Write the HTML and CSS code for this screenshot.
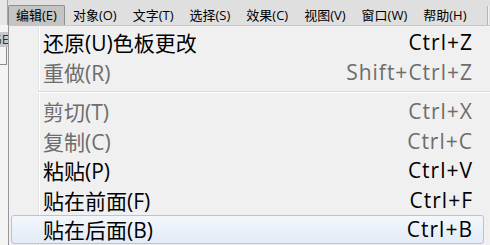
FILE: index.html
```html
<!DOCTYPE html>
<html lang="zh">
<head>
<meta charset="utf-8">
<link rel="stylesheet" href="styles.css">
</head>
<body>
<div class="app">
  <div class="strip">
    <div class="s-top"></div>
    <div class="s-gap"></div>
    <div class="s-ge"><span>GE</span></div>
    <div class="s-corner"></div>
    <div class="s-rest"></div>
  </div>
  <div class="main">
    <div class="menubar">
      <div class="mb-item active">编辑(E)</div>
      <div class="mb-item">对象(O)</div>
      <div class="mb-item">文字(T)</div>
      <div class="mb-item">选择(S)</div>
      <div class="mb-item">效果(C)</div>
      <div class="mb-item">视图(V)</div>
      <div class="mb-item">窗口(W)</div>
      <div class="mb-item">帮助(H)</div>
      <div class="mb-sep"></div>
    </div>
    <div class="menu">
      <div class="gutter"></div>
      <div class="items">
        <div class="row"><span class="label">还原(U)色板更改</span><span class="key">Ctrl+Z</span></div>
        <div class="row disabled"><span class="label">重做(R)</span><span class="key">Shift+Ctrl+Z</span></div>
        <div class="sep"></div>
        <div class="row disabled"><span class="label">剪切(T)</span><span class="key">Ctrl+X</span></div>
        <div class="row disabled"><span class="label">复制(C)</span><span class="key">Ctrl+C</span></div>
        <div class="row"><span class="label">粘贴(P)</span><span class="key">Ctrl+V</span></div>
        <div class="row"><span class="label">贴在前面(F)</span><span class="key">Ctrl+F</span></div>
        <div class="row hover"><span class="label">贴在后面(B)</span><span class="key">Ctrl+B</span></div>
      </div>
    </div>
  </div>
</div>
</body>
</html>
```

FILE: styles.css
```css
* { box-sizing: border-box; }
html, body { margin: 0; padding: 0; }
body {
  width: 490px;
  height: 245px;
  overflow: hidden;
  background: #f0f0f0;
  font-family: "Open Sans", "Noto Sans CJK SC", sans-serif;
}
.app { display: flex; width: 490px; height: 245px; }

.strip { width: 8px; flex: none; display: flex; flex-direction: column; overflow: hidden; background: #f4f4f4; }
.s-top { height: 25px; background: #e6e6e6; border-right: 1px solid #a4a4a4; }
.s-gap { height: 7px; background: #f4f4f4; }
.s-ge { height: 15px; background: #c9c9c9; display: flex; justify-content: flex-end; overflow: hidden; font-size: 13px; line-height: 15px; color: #333; }
.s-ge span { flex: none; margin-right: -1px; }
.s-corner { height: 18px; width: 7px; border-right: 1px solid #8a8a8a; border-bottom: 1px solid #8a8a8a; }
.s-rest { flex: 1; }

.main { flex: 1; display: flex; flex-direction: column; min-width: 0; }

.menubar {
  height: 25px;
  flex: none;
  background: #dfdfdf;
  display: flex;
  align-items: flex-end;
  font-size: 13px;
  color: #000;
}
.mb-item {
  height: 20px;
  line-height: 18px;
  padding: 0 7px 0 7px;
  border: 1px solid transparent;
  border-bottom: none;
  white-space: nowrap;
}
.mb-item.active {
  background: #c4c4c4;
  border-color: #8f8f8f;
  border-radius: 2px 2px 0 0;
}
.mb-sep {
  height: 19px;
  width: 2px;
  margin-left: 12px;
  align-self: flex-end;
  border-left: 1px solid #b4b4b4;
  border-right: 1px solid #f4f4f4;
}

.menu {
  flex: 1;
  display: flex;
  background: #f0f0f0;
  border-left: 1px solid #979797;
  border-top: 1px solid #c6c6c6;
  position: relative;
}
.gutter {
  width: 30px;
  flex: none;
  border-right: 1px solid #e2e3e3;
  box-shadow: 1px 0 0 #ffffff;
  margin-right: -30px;
  position: relative;
  z-index: 0;
}
.items { flex: 1; padding-top: 1.5px; min-width: 0; position: relative; z-index: 1; }
.row {
  height: 29.5px;
  display: flex;
  align-items: center;
  justify-content: space-between;
  margin: 0 6px 0 2px;
  padding: 0 11px 0 31px;
  border: 1px solid transparent;
  border-radius: 3px;
  font-size: 21px;
  color: #000;
  white-space: nowrap;
}
.row.disabled { color: #6d6d6d; }
.row.hover {
  border-color: #a9c7ec;
  background: linear-gradient(#f3f7fc, #e3ebf7);
}
.key { letter-spacing: 1px; margin-right: -1px; }
.sep {
  height: 10px;
  margin-left: 29px;
  display: flex;
  flex-direction: column;
  justify-content: center;
}
.sep::before { content: ""; display: block; height: 1px; background: #d7d7d7; }
.sep::after { content: ""; display: block; height: 1px; background: #ffffff; }
```
